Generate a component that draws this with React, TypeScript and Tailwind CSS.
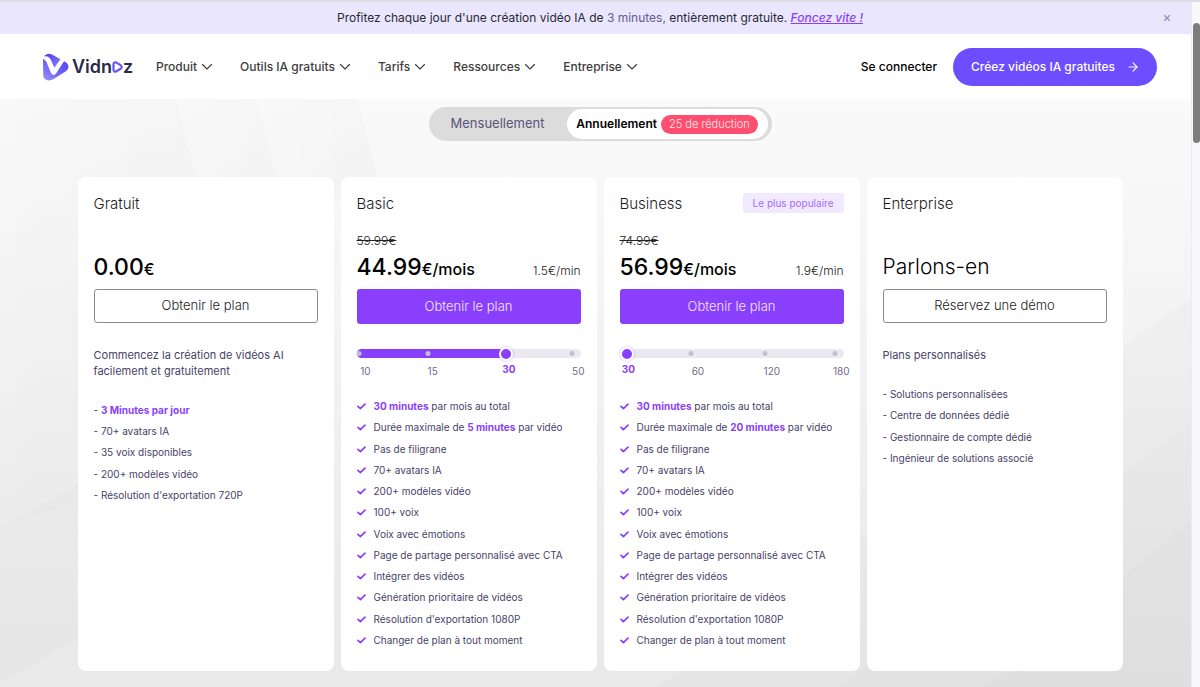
import React, { useState } from 'react';
import { ArrowRight, X } from 'lucide-react';

type Mark = { label: string; dot: number; text: number; value: number };

const navItems = ['Produit', 'Outils IA gratuits', 'Tarifs', 'Ressources', 'Entreprise'];

const basicMarks: Mark[] = [
  { label: '10', dot: 1, text: 4, value: 0 },
  { label: '15', dot: 32, text: 34, value: 33 },
  { label: '30', dot: 67, text: 68, value: 68 },
  { label: '50', dot: 96, text: 99, value: 100 },
];

const businessMarks: Mark[] = [
  { label: '30', dot: 3, text: 4, value: 0 },
  { label: '60', dot: 32, text: 35, value: 33 },
  { label: '120', dot: 65, text: 68, value: 67 },
  { label: '180', dot: 96, text: 99, value: 100 },
];

const commonFeatures = [
  'Pas de filigrane',
  '70+ avatars IA',
  '200+ modèles vidéo',
  '100+ voix',
  'Voix avec émotions',
  'Page de partage personnalisé avec CTA',
  'Intégrer des vidéos',
  'Génération prioritaire de vidéos',
  "Résolution d'exportation 1080P",
  'Changer de plan à tout moment',
];

const Logo = () => (
  <a href="#" aria-label="Vidnoz" className="flex w-[113px] items-center text-[#272b45]">
    <svg width="26" height="28" viewBox="0 0 26 28" className="mr-[3px] shrink-0">
      <defs>
        <linearGradient id="logo-top" x1="0" y1="0" x2="1" y2="1">
          <stop offset="0" stopColor="#4a35ee" />
          <stop offset="1" stopColor="#8f85fb" />
        </linearGradient>
        <linearGradient id="logo-body" x1="1" y1="0" x2="0" y2="1">
          <stop offset="0" stopColor="#4f40f2" />
          <stop offset="0.6" stopColor="#7468f8" />
          <stop offset="1" stopColor="#9c92fc" />
        </linearGradient>
      </defs>
      <path d="M1 3.5C3.5.3 6.2 0 9.5 1.7L17.5 6.2 11.3 14.8 8 7C6.4 3.8 4 2.6 1 3.5Z" fill="url(#logo-top)" />
      <path
        d="M0 6C1.8 6.4 3 7.8 4 10.2L7.8 19.6C9.2 22.6 11.7 22.6 13.4 20L20.5 9C21.2 8 22 8.4 22.8 9.2C26.4 12.1 26.4 15.4 22.8 18.3L10.2 26.3C5 29 .6 26.5.2 22.5Z"
        fill="url(#logo-body)"
      />
    </svg>
    <span className="text-[18px] leading-6 font-semibold">Vidn</span>
    <svg width="11" height="12" viewBox="0 0 11 12" className="mt-px shrink-0">
      <path
        d="M1.5 3.2C1.5 1.5 3 .9 4.4 1.6L8.6 4.1C10 5 10 6.9 8.6 7.8L4.4 10.3C3 11.1 1.5 10.4 1.5 8.8Z"
        fill="none"
        stroke="#6757f6"
        strokeWidth="2.2"
      />
    </svg>
    <span className="text-[18px] leading-6 font-semibold">z</span>
  </a>
);

const NavChevron = () => (
  <svg width="10" height="6" viewBox="0 0 10 6" fill="none" stroke="currentColor" strokeWidth="1.1">
    <path d="M.5.5 5 5 9.5.5" strokeLinecap="round" strokeLinejoin="round" />
  </svg>
);

const Tick = () => (
  <svg width="9" height="7" viewBox="0 0 9 7" fill="none" className="shrink-0 stroke-[#8a3ffc]">
    <path d="M1 3.4 3.4 5.6 8 1.2" strokeWidth="1.7" strokeLinecap="round" strokeLinejoin="round" />
  </svg>
);

const Backdrop = () => (
  <svg
    className="absolute inset-0 -z-10 h-full w-full"
    viewBox="0 0 1200 588"
    preserveAspectRatio="none"
    aria-hidden="true"
  >
    <defs>
      <linearGradient id="bg-fade" x1="0" y1="0" x2="0" y2="1">
        <stop offset="0" stopColor="#fafafa" />
        <stop offset="0.3" stopColor="#f5f5f5" />
        <stop offset="0.7" stopColor="#ededed" />
        <stop offset="1" stopColor="#e9e9e9" />
      </linearGradient>
      <linearGradient id="bg-beam" x1="0" y1="0" x2="1" y2="0">
        <stop offset="0" stopColor="#000" stopOpacity="0.005" />
        <stop offset="1" stopColor="#000" stopOpacity="0.02" />
      </linearGradient>
    </defs>
    <rect width="1200" height="588" fill="url(#bg-fade)" />
    <path d="M0 0H176L202 100 203 358 0 428Z" fill="url(#bg-beam)" />
    <path d="M176 0H256L282 100H202Z" fill="url(#bg-beam)" />
    <path d="M256 0H357L383 100H282Z" fill="url(#bg-beam)" />
    <path d="M0 428L78 384V540L0 582Z" fill="#000" fillOpacity="0.01" />
    <path d="M656 588L1200 191V588Z" fill="#000" fillOpacity="0.015" />
    <path d="M837 588L1200 316V588Z" fill="#000" fillOpacity="0.01" />
    <path d="M982 588L1200 414V588Z" fill="#000" fillOpacity="0.01" />
  </svg>
);

const Slider = ({ name, marks, initial }: { name: string; marks: Mark[]; initial: number }) => {
  const [value, setValue] = useState(initial);
  const active = marks.reduce((a, b) => (Math.abs(b.value - value) < Math.abs(a.value - value) ? b : a));

  return (
    <div className="mt-[25px] h-[47px]">
      <div className="relative h-[9px] rounded-full bg-[#ebe9f0]">
        <div className="h-full rounded-full bg-[#8a3ffc]" style={{ width: `${value}%` }} />
        {marks.map((mark) => (
          <span
            key={mark.label}
            className="absolute top-[2px] size-[5px] -translate-x-1/2 rounded-full bg-[#c3bfd3]"
            style={{ left: `${mark.dot}%` }}
          />
        ))}
        <input
          type="range"
          min={0}
          max={100}
          value={value}
          aria-label={`Minutes par mois, plan ${name}`}
          onChange={(e) => setValue(Number(e.target.value))}
          className="absolute inset-0 h-full w-full cursor-pointer appearance-none bg-transparent [&::-webkit-slider-thumb]:size-[14px] [&::-webkit-slider-thumb]:appearance-none [&::-webkit-slider-thumb]:rounded-full [&::-webkit-slider-thumb]:border-2 [&::-webkit-slider-thumb]:border-white [&::-webkit-slider-thumb]:bg-[#8a3ffc] [&::-webkit-slider-thumb]:shadow-[0_0_3px_rgba(138,63,252,0.4)]"
        />
      </div>
      <div className="relative">
        {marks.map((mark) => (
          <span
            key={mark.label}
            className={
              mark === active
                ? 'absolute top-[3px] -translate-x-1/2 text-[10px] leading-4 font-bold text-[#8a3ffc]'
                : 'absolute top-[5px] -translate-x-1/2 text-[10px] leading-4 text-[#6f6a8c]'
            }
            style={{ left: `${mark.text}%` }}
          >
            {mark.label}
          </span>
        ))}
      </div>
    </div>
  );
};

const PlanHeader = ({ title, popular }: { title: string; popular?: boolean }) => (
  <div className="flex h-5 items-center justify-between">
    <h2 className="pt-[2px] text-[15px] leading-5 font-light text-[#1c1c1c]">{title}</h2>
    {popular && (
      <span className="rounded-[3px] bg-[#f1e9ff] px-[10px] text-[10px] leading-5 text-[#a56bfd]">
        Le plus populaire
      </span>
    )}
  </div>
);

const Price = ({ amount, suffix, rate }: { amount: string; suffix: string; rate?: string }) => (
  <div className="flex h-8 items-baseline justify-between">
    <p className="font-medium whitespace-nowrap text-black">
      <span className="text-[23px] leading-8">{amount}</span>
      <span className="text-[16px]">{suffix}</span>
    </p>
    {rate && <span className="text-[12px] font-light text-[#222]">{rate}</span>}
  </div>
);

const OutlineButton = ({ children }: { children: React.ReactNode }) => (
  <button
    type="button"
    className="mt-[6px] h-[34px] w-full rounded-[3px] border border-[#8c8c8c] bg-white text-[13px] font-light text-[#222]"
  >
    {children}
  </button>
);

const PaidPlan = ({
  title,
  oldPrice,
  price,
  rate,
  marks,
  initial,
  maxDuration,
  popular,
}: {
  title: string;
  oldPrice: string;
  price: string;
  rate: string;
  marks: Mark[];
  initial: number;
  maxDuration: string;
  popular?: boolean;
}) => (
  <section className="rounded-lg bg-white px-4 pt-4 pb-5">
    <PlanHeader title={title} popular={popular} />
    <p className="mt-5 mb-[2px] h-4 text-[12px] leading-4 font-light text-[#222]">
      <s>{oldPrice}</s>
    </p>
    <Price amount={price} suffix="€/mois" rate={rate} />
    <button
      type="button"
      className="mt-[6px] block h-[35px] w-full rounded-[3px] bg-[#8a3ffc] text-[13px] font-light text-[#f1e6ff]"
    >
      Obtenir le plan
    </button>
    <Slider name={title} marks={marks} initial={initial} />
    <ul className="grid h-[255px] auto-rows-fr items-center text-[10px] whitespace-nowrap text-[#474268]">
      {[
        <>
          <b className="font-bold text-[#8a3ffc]">30 minutes</b> par mois au total
        </>,
        <>
          Durée maximale de <b className="font-bold text-[#8a3ffc]">{maxDuration}</b> par vidéo
        </>,
        ...commonFeatures,
      ].map((feature, i) => (
        <li key={i} className="flex items-center gap-2">
          <Tick />
          <span>{feature}</span>
        </li>
      ))}
    </ul>
  </section>
);

const App = () => {
  return (
    <div className="flex min-h-screen flex-col overflow-x-hidden bg-white font-['Inter',sans-serif]">
      {/* Promo banner */}
      <div className="relative flex h-[34px] items-center justify-center border-t-2 border-[#e0dce4] bg-[#e9e6fd] text-[12px] text-[#2a2a35]">
        <p>
          Profitez chaque jour d'une création vidéo IA de <span className="text-[#665c8e]">3 minutes,</span> entièrement
          gratuite.{' '}
          <a href="#" className="font-medium text-[#8a3ffc] italic underline">
            Foncez vite !
          </a>
        </p>
        <button type="button" aria-label="Fermer" className="absolute right-7 text-[#9a91c4]">
          <X size={10} strokeWidth={3} />
        </button>
      </div>

      {/* Navbar */}
      <header className="flex h-[65px] shrink-0 items-center bg-white px-[43px]">
        <Logo />
        <nav className="flex items-center gap-7">
          {navItems.map((item) => (
            <button
              key={item}
              type="button"
              className="flex items-center gap-[5px] text-[12px] font-medium whitespace-nowrap text-[#3d3d3d]"
            >
              {item}
              <NavChevron />
            </button>
          ))}
        </nav>
        <a href="#" className="ml-auto text-[12px] font-medium text-black">
          Se connecter
        </a>
        <a
          href="#"
          className="ml-4 flex h-[38px] items-center gap-[11px] rounded-full bg-[#6c4dff] pr-[17px] pl-[18px] text-[12px] font-medium text-white"
        >
          Créez vidéos IA gratuites
          <ArrowRight size={14} />
        </a>
      </header>

      <main className="relative isolate flex-1 px-[77px] pt-2 pb-[17px]">
        <Backdrop />

        {/* Billing period */}
        <div className="mx-auto flex h-[34px] w-[343px] items-center rounded-full bg-[#dcdcdc] pr-1">
          <button type="button" className="flex-1 text-[13px] text-[#5a5478]">
            Mensuellement
          </button>
          <button
            type="button"
            className="flex h-[30px] w-[201px] items-center justify-center gap-1 rounded-full bg-white text-[12px] font-semibold text-black"
          >
            Annuellement
            <span className="rounded-full bg-[#ff4f70] px-2 text-[11px] leading-[19px] font-light text-[#ffe6eb]">
              25 de réduction
            </span>
          </button>
        </div>

        {/* Plans */}
        <div className="mx-auto mt-9 grid max-w-[1045px] grid-cols-4 gap-[7px]">
          <section className="rounded-lg bg-white p-4">
            <PlanHeader title="Gratuit" />
            <div className="mt-[38px]">
              <Price amount="0.00" suffix="€" />
            </div>
            <OutlineButton>Obtenir le plan</OutlineButton>
            <p className="mt-6 text-[11px] leading-4 text-[#474268]">
              Commencez la création de vidéos AI facilement et gratuitement
            </p>
            <ul className="mt-[21px] grid h-[106px] auto-rows-fr items-center text-[10px] text-[#474268]">
              <li>
                - <b className="font-bold text-[#8a3ffc]">3 Minutes par jour</b>
              </li>
              <li>- 70+ avatars IA</li>
              <li>- 35 voix disponibles</li>
              <li>- 200+ modèles vidéo</li>
              <li>- Résolution d'exportation 720P</li>
            </ul>
          </section>

          <PaidPlan
            title="Basic"
            oldPrice="59.99€"
            price="44.99"
            rate="1.5€/min"
            marks={basicMarks}
            initial={68}
            maxDuration="5 minutes"
          />

          <PaidPlan
            title="Business"
            oldPrice="74.99€"
            price="56.99"
            rate="1.9€/min"
            marks={businessMarks}
            initial={0}
            maxDuration="20 minutes"
            popular
          />

          <section className="rounded-lg bg-white p-4">
            <PlanHeader title="Enterprise" />
            <p className="mt-[38px] text-[21px] leading-8 font-light text-black">Parlons-en</p>
            <OutlineButton>Réservez une démo</OutlineButton>
            <p className="mt-6 text-[11px] leading-4 text-[#474268]">Plans personnalisés</p>
            <ul className="mt-[21px] grid h-[85px] auto-rows-fr items-center text-[10px] text-[#474268]">
              <li>- Solutions personnalisées</li>
              <li>- Centre de données dédié</li>
              <li>- Gestionnaire de compte dédié</li>
              <li>- Ingénieur de solutions associé</li>
            </ul>
          </section>
        </div>
      </main>

      {/* Scroll indicator */}
      <div className="fixed top-[2px] right-0 bottom-0 w-[9px] border-l border-[#ececec] bg-[#f9f9fb] pt-[21px]">
        <div className="ml-px h-[120px] w-[7px] rounded-full bg-[#7d7d7d]" />
      </div>
    </div>
  );
};

export default App;
